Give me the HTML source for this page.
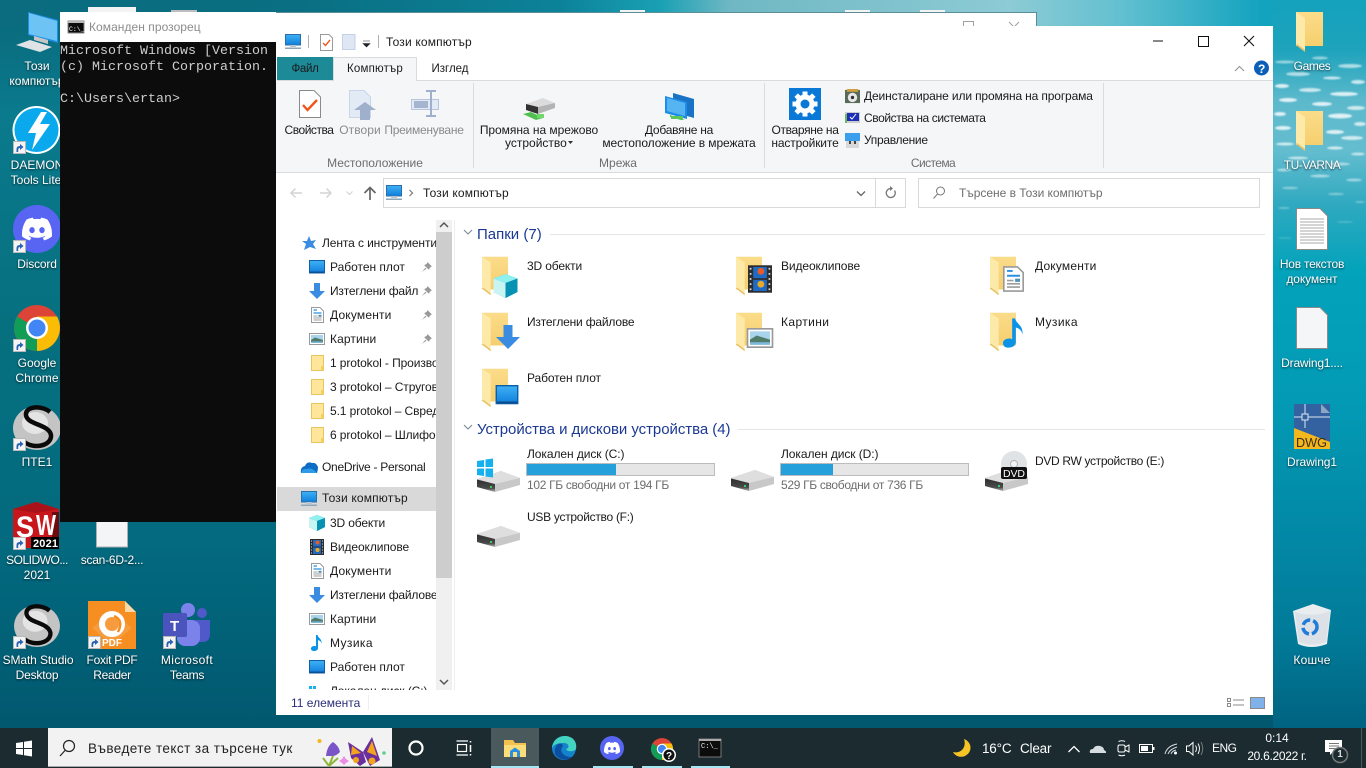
<!DOCTYPE html>
<html lang="bg"><head><meta charset="utf-8"><title>Този компютър</title>
<style>
html,body{margin:0;padding:0;width:1366px;height:768px;overflow:hidden;background:#046a80}
body{position:relative;font-family:"Liberation Sans","DejaVu Sans",sans-serif;font-size:12px;color:#1a1a1a}
.t{position:absolute;white-space:nowrap;line-height:16px;letter-spacing:0}
.c{transform:translateX(-50%)}
.w{color:#fff;text-shadow:0 1px 2px rgba(0,0,0,.7)}
.g{color:#8a8a8a}
.s{color:#6d6d6d}
.h{color:#1c3a94;font-size:15px;line-height:18px}
.l,svg.l{position:absolute;left:0;top:0;width:1366px;height:768px}
.r{position:absolute}
.clip{position:absolute;left:277px;top:220px;width:159px;height:470px;overflow:hidden}
.clip .t{margin-left:-277px;margin-top:-220px}
</style></head><body>

<!-- wallpaper -->
<div class="r" style="left:0;top:0;width:1366px;height:768px;background:linear-gradient(90deg,#0a6c7e 0,#0a6f82 300px,#0c8299 560px,#19a0b4 660px,#6fb8c3 730px,#8dcbd5 1010px,#63c0d0 1120px,#14a3bf 1260px,#12a2bc 1366px)"></div>
<div class="r" style="left:0;top:24px;width:1366px;height:704px;background:linear-gradient(180deg,rgba(5,118,136,0) 0,#0a7a8d 90px,#06707f 300px,#036a7f 520px,#01586f 704px)"></div>
<div class="r" style="left:1273px;top:0;width:93px;height:728px;background:linear-gradient(180deg,#14a2bd 0,#1ea3bc 50px,#5cb9cc 100px,#64bdcf 150px,#2fa9c0 205px,#03a3bb 270px,#039ab5 400px,#0285a3 560px,#017a98 640px,#006381 728px)"></div>
<svg class="l" viewBox="0 0 1366 768" style="filter:blur(.7px)">
<g fill="#fff">
<ellipse cx="1285" cy="62" rx="10" ry="1.500" opacity=".5"/><ellipse cx="1320" cy="58" rx="8" ry="1.500" opacity=".5"/><ellipse cx="1350" cy="66" rx="12" ry="2" opacity=".6"/>
<ellipse cx="1298" cy="74" rx="12" ry="2" opacity=".6"/><ellipse cx="1332" cy="78" rx="9" ry="1.500" opacity=".7"/><ellipse cx="1358" cy="82" rx="7" ry="2" opacity=".7"/>
<ellipse cx="1282" cy="86" rx="7" ry="2" opacity=".8"/><ellipse cx="1310" cy="90" rx="11" ry="2" opacity=".7"/><ellipse cx="1344" cy="94" rx="14" ry="2" opacity=".8"/>
<ellipse cx="1288" cy="100" rx="9" ry="2" opacity=".8"/><ellipse cx="1322" cy="104" rx="10" ry="2" opacity=".8"/><ellipse cx="1356" cy="108" rx="9" ry="2" opacity=".7"/>
<ellipse cx="1280" cy="114" rx="6" ry="2" opacity=".8"/><ellipse cx="1340" cy="116" rx="12" ry="2.500" opacity=".8"/><ellipse cx="1360" cy="124" rx="6" ry="2" opacity=".7"/>
<ellipse cx="1283" cy="128" rx="8" ry="2" opacity=".8"/><ellipse cx="1335" cy="132" rx="9" ry="2" opacity=".8"/><ellipse cx="1352" cy="138" rx="11" ry="2" opacity=".7"/>
<ellipse cx="1285" cy="144" rx="9" ry="1.500" opacity=".7"/><ellipse cx="1335" cy="148" rx="8" ry="1.500" opacity=".7"/><ellipse cx="1358" cy="154" rx="7" ry="1.500" opacity=".6"/>
<ellipse cx="1298" cy="158" rx="10" ry="1.500" opacity=".6"/><ellipse cx="1340" cy="164" rx="10" ry="1.500" opacity=".5"/><ellipse cx="1284" cy="170" rx="7" ry="1.500" opacity=".5"/>
<ellipse cx="1320" cy="176" rx="10" ry="1.500" opacity=".5"/><ellipse cx="1354" cy="180" rx="8" ry="1.500" opacity=".45"/><ellipse cx="1290" cy="188" rx="8" ry="1.200" opacity=".4"/>
<ellipse cx="1336" cy="194" rx="8" ry="1.200" opacity=".35"/><ellipse cx="1360" cy="202" rx="5" ry="1" opacity=".3"/><ellipse cx="1284" cy="208" rx="6" ry="1" opacity=".3"/>
<ellipse cx="1345" cy="222" rx="8" ry="1" opacity=".2"/><ellipse cx="1285" cy="238" rx="7" ry="1" opacity=".15"/>
</g>
</svg>

<svg width="0" height="0" style="position:absolute">
<defs>
<linearGradient id="sc" x1="0" y1="0" x2="0" y2="1"><stop offset="0" stop-color="#3fb1f5"/><stop offset="1" stop-color="#0f7fdc"/></linearGradient>
<linearGradient id="fo" x1="0" y1="0" x2="0" y2="1"><stop offset="0" stop-color="#fbdc8a"/><stop offset="1" stop-color="#f6cf6e"/></linearGradient>
<linearGradient id="dr" x1="0" y1="0" x2="0" y2="1"><stop offset="0" stop-color="#2f2f2f"/><stop offset=".7" stop-color="#4a4a4a"/><stop offset="1" stop-color="#b5b5b5"/></linearGradient>
<symbol id="arrow" viewBox="0 0 13 13"><rect width="13" height="13" fill="#f4f4f4"/><rect x=".5" y=".5" width="12" height="12" fill="none" stroke="#b8b8b8"/><path d="M3.5 11V8q0-3 3.5-3V3l3.5 3-3.5 3V7q-1.8 0-1.8 2v2z" fill="#2a62b4"/></symbol>
<symbol id="folder" viewBox="0 0 27 40"><path d="M0 0H27V34H0z" fill="url(#fo)"/><path d="M0 0L9 6V40L0 33z" fill="#fdeaa8"/><path d="M0 33L9 40V38L1 32z" fill="#e5c063"/></symbol>
<symbol id="drive" viewBox="0 0 43 22"><path d="M0 9L24 1 43 8V15L18 22 0 17z" fill="#c8c8c8"/><path d="M0 9L24 1 43 8 18 14z" fill="#dedede"/><path d="M0 9.500L18 14V22L0 17z" fill="url(#dr)"/><rect x="13" y="16" width="2" height="2" fill="#35d05a"/></symbol>
<symbol id="mon" viewBox="0 0 16 16"><rect x=".5" y=".5" width="15" height="10.5" fill="url(#sc)" stroke="#2a6fa8"/><rect x="5" y="11" width="6" height="2" fill="#b9c6cf"/><rect x="0" y="13.5" width="16" height="1.5" fill="#8ea6b7"/></symbol>
<symbol id="down" viewBox="0 0 16 16"><path d="M5 0H11V8H16L8 16 0 8H5z" fill="#3a8ce2"/></symbol>
<symbol id="desk" viewBox="0 0 16 14"><rect x=".5" y=".5" width="15" height="12.5" fill="url(#sc)" stroke="#0f5fa8"/><rect x="1" y="11.5" width="14" height="1.5" fill="#0b4f92"/></symbol>
<symbol id="doc" viewBox="0 0 13 16"><path d="M.5.5H9L12.5 4V15.5H.5z" fill="#fff" stroke="#9a9a9a"/><path d="M2.5 3H6M2.5 6H10.500" stroke="#2d8fe0" stroke-width="1.200"/><path d="M2.5 9H6.500M2.5 11H10.500M2.5 13H10.500" stroke="#9c9c9c"/><rect x="7.500" y="7.800" width="3" height="2" fill="#4d93b8"/></symbol>
<symbol id="pic" viewBox="0 0 16 12"><rect x=".5" y=".5" width="15" height="11" fill="#fff" stroke="#9a9a9a"/><rect x="2" y="2" width="12" height="8" fill="#a9d4ee"/><path d="M2 7L6 4.5 14 7V10H2z" fill="#527c6a"/><rect x="2" y="8.5" width="12" height="1.5" fill="#7cb7dc"/></symbol>
<symbol id="vid" viewBox="0 0 14 16"><rect width="14" height="16" fill="#2d2d2d"/><rect x="3" y="1" width="8" height="6.5" fill="#1f6ac4"/><rect x="3" y="8.5" width="8" height="6.5" fill="#1f6ac4"/><circle cx="7.5" cy="3.5" r="2" fill="#e85b28"/><circle cx="7.5" cy="11" r="2" fill="#e8a928"/><path d="M1 2h1M1 5h1M1 8h1M1 11h1M1 14h1M12 2h1M12 5h1M12 8h1M12 11h1M12 14h1" stroke="#ddd"/></symbol>
<symbol id="music" viewBox="0 0 12 16"><path d="M5 0H6.600C7 3 11.500 4 10.500 9 10.500 6.500 8.500 5.500 7 5V13C7 15 5 16 3 16S0 15 0 13.500 1.500 11 3.300 11C4 11 4.600 11.100 5 11.400z" fill="#0b93e8"/></symbol>
<symbol id="cube" viewBox="0 0 16 16"><path d="M8 0L16 3V12L8 16 0 12V3z" fill="#12a9c8"/><path d="M8 0L16 3 8 6 0 3z" fill="#8ff0ee"/><path d="M0 3L8 6V16L0 12z" fill="#c8f4f2"/><path d="M8 6L16 3V12L8 16z" fill="#0792b4"/></symbol>
<symbol id="yf" viewBox="0 0 13 16"><rect x=".5" y=".5" width="12" height="15" fill="#ffe69a" stroke="#e8c560"/><rect x="10" y="11" width="2.500" height="4.500" fill="#f4cf5e"/></symbol>
<symbol id="pin" viewBox="0 0 10 10"><path d="M5.500 0L10 4.500 8.500 5 6.800 7.800 2.200 3.200 5 1.500zM3.400 5.600L0 10 4.400 6.600z" fill="#9a9a9a"/></symbol>
<symbol id="shield" viewBox="0 0 16 16"><rect x="0" y="1" width="16" height="14" fill="#5a6a5a"/><rect x="2" y="0" width="12" height="3" fill="#d0a040"/><circle cx="8" cy="9" r="5" fill="#e8e8e8"/><circle cx="8" cy="9" r="1.800" fill="#333"/></symbol>
<symbol id="discord" viewBox="0 0 24 24"><path d="M20.317 4.37a19.791 19.791 0 0 0-4.885-1.515.074.074 0 0 0-.079.037c-.21.375-.444.864-.608 1.25a18.27 18.27 0 0 0-5.487 0 12.64 12.64 0 0 0-.617-1.25.077.077 0 0 0-.079-.037A19.736 19.736 0 0 0 3.677 4.37a.07.07 0 0 0-.032.027C.533 9.046-.32 13.58.099 18.057a.082.082 0 0 0 .031.057 19.9 19.9 0 0 0 5.993 3.03.078.078 0 0 0 .084-.028 14.09 14.09 0 0 0 1.226-1.994.076.076 0 0 0-.041-.106 13.107 13.107 0 0 1-1.872-.892.077.077 0 0 1-.008-.128 10.2 10.2 0 0 0 .372-.292.074.074 0 0 1 .077-.01c3.928 1.793 8.18 1.793 12.062 0a.074.074 0 0 1 .078.01c.12.098.246.198.373.292a.077.077 0 0 1-.006.127 12.299 12.299 0 0 1-1.873.892.077.077 0 0 0-.041.107c.36.698.772 1.362 1.225 1.993a.076.076 0 0 0 .084.028 19.839 19.839 0 0 0 6.002-3.03.077.077 0 0 0 .032-.054c.5-5.177-.838-9.674-3.549-13.66a.061.061 0 0 0-.031-.03zM8.02 15.33c-1.183 0-2.157-1.085-2.157-2.419 0-1.333.956-2.419 2.157-2.419 1.21 0 2.176 1.096 2.157 2.42 0 1.333-.956 2.418-2.157 2.418zm7.975 0c-1.183 0-2.157-1.085-2.157-2.419 0-1.333.955-2.419 2.157-2.419 1.21 0 2.176 1.096 2.157 2.42 0 1.333-.946 2.418-2.157 2.418z" fill="#fff"/></symbol>
<symbol id="chrome" viewBox="0 0 46 46"><circle cx="23" cy="23" r="23" fill="#db4437"/><path d="M23 23L43 34A23 23 0 0 1 23 46 23 23 0 0 1 3 34z" fill="#0f9d58"/><path d="M23 23L23 46A23 23 0 0 0 43 34 23 23 0 0 0 43 11.500H23z" fill="#fbbc05"/><path d="M23 23L3 34A23 23 0 0 1 3 11.500z" fill="#0f9d58"/><circle cx="23" cy="23" r="11" fill="#fff"/><circle cx="23" cy="23" r="8.500" fill="#4285f4"/></symbol>
<symbol id="smath" viewBox="0 0 48 46"><ellipse cx="24" cy="23" rx="24" ry="22" fill="#c4c4c4"/><ellipse cx="22" cy="18" rx="13" ry="11" fill="#e4e4e4"/><path d="M37 7C29 0 12 1 13 10 14 20 36 19 38 30 39 41 20 45 10 36" fill="none" stroke="#0a0a0a" stroke-width="4.500"/></symbol>
</defs></svg>

<!-- desktop icons -->
<svg class="l" viewBox="0 0 1366 768">
<path d="M28 12L58 20V43L28 35z" fill="#1d8fe6"/><path d="M29 13L57 21V41L29 34z" fill="#6ec3f5"/><path d="M34 36L48 40V44L34 40z" fill="#c6c6c6"/><path d="M16 45L30 40 52 47 40 52z" fill="#dfe3e6"/>
<rect x="88" y="7" width="48" height="6" fill="#f3f3f3"/><rect x="171" y="10" width="26" height="3" fill="#bdbdbd"/>
<rect x="620" y="10" width="25" height="4" fill="#f3f3f3"/><rect x="845" y="10" width="25" height="4" fill="#f3f3f3"/><rect x="920" y="10" width="25" height="4" fill="#f3f3f3"/>
<circle cx="36.500" cy="130" r="24" fill="#fff"/><circle cx="36.500" cy="130" r="22" fill="#0aa8ec"/><path d="M41 112L28 133H36L32 150 50 124H40L47 112z" fill="#fff"/>
<use href="#arrow" x="13" y="141" width="13" height="13"/>
<circle cx="37" cy="229" r="24" fill="#5865f2"/><use href="#discord" x="22" y="214" width="30" height="30"/>
<use href="#arrow" x="13" y="240" width="13" height="13"/>
<use href="#chrome" x="14" y="305" width="46" height="46"/><use href="#arrow" x="13" y="339" width="13" height="13"/>
<use href="#smath" x="13" y="405" width="48" height="46"/><use href="#arrow" x="13" y="438" width="13" height="13"/>
<path d="M13 509L36 502 59 509V548H13z" fill="#c8161d"/><path d="M13 509L36 502 59 509 36 513z" fill="#a81218"/><path d="M52 512H59V548H52z" fill="#6e0a0e"/>
<text x="16" y="537" font-family="Liberation Sans" font-weight="700" font-size="30" fill="#fff" textLength="18" lengthAdjust="spacingAndGlyphs">S</text><text x="36" y="535" font-family="Liberation Sans" font-weight="700" font-size="29" fill="#fff" textLength="20" lengthAdjust="spacingAndGlyphs">W</text>
<rect x="31" y="537" width="28" height="12" fill="#000"/><text x="33" y="547" font-family="Liberation Sans" font-weight="700" font-size="11" fill="#fff" textLength="25">2021</text>
<use href="#arrow" x="13" y="537" width="13" height="13"/>
<rect x="96.500" y="520" width="31" height="27" fill="#f4f5f7" stroke="#b0b0b0"/>
<use href="#smath" x="13" y="604" width="48" height="44"/><use href="#arrow" x="13" y="636" width="13" height="13"/>
<path d="M88 601H125L136 612V649H88z" fill="#f68e22"/><path d="M125 601L136 612H125z" fill="#fcd9a8"/><path d="M112 612L132 628 112 645 92 628z" fill="#fff" opacity=".13"/>
<circle cx="112" cy="624" r="10" fill="none" stroke="#fff" stroke-width="6"/><path d="M114 616Q124 620 118 632" fill="none" stroke="#f68e22" stroke-width="2.500"/>
<text x="102" y="646" font-family="Liberation Sans" font-weight="700" font-size="10" fill="#fff">PDF</text>
<use href="#arrow" x="88" y="636" width="13" height="13"/>
<circle cx="188" cy="610" r="7" fill="#7b83eb"/><circle cx="202" cy="613" r="5" fill="#5059c9"/><path d="M196 620H210V634Q210 642 202 642H196z" fill="#5059c9"/><rect x="177" y="620" width="23" height="26" rx="8" fill="#7b83eb"/>
<rect x="163" y="613" width="24" height="24" rx="2" fill="#4b53bc"/><text x="170" y="631" font-family="Liberation Sans" font-weight="700" font-size="15" fill="#fff">T</text>
<use href="#arrow" x="163" y="636" width="13" height="13"/>
<use href="#folder" x="1296" y="12" width="27" height="40"/><use href="#folder" x="1296" y="111" width="27" height="40"/>
<path d="M1296.500 208.500H1320L1327.500 216V249.500H1296.500z" fill="#fff" stroke="#8a8a8a"/><path d="M1300 219H1324M1300 222H1324M1300 225H1324M1300 228H1324M1300 231H1324M1300 234H1324M1300 237H1324M1300 240H1324M1300 243H1324" stroke="#a8a8a8"/>
<path d="M1296.500 307.500H1320L1327.500 315V348.500H1296.500z" fill="#f5f6f8" stroke="#8a8a8a"/>
<rect x="1294" y="404" width="36" height="45" fill="#34619f"/><path d="M1294 428L1330 442V449H1294z" fill="#f5b71e"/><path d="M1321 404L1330 413H1321z" fill="#8da6c6"/><path d="M1294 417H1330M1305 404V428" stroke="#dbe6f2"/><rect x="1302" y="414" width="6" height="6" fill="#34619f" stroke="#dbe6f2"/>
<text x="1296" y="447" font-family="Liberation Sans" font-size="12.500" fill="#3a2f1a" textLength="31" lengthAdjust="spacingAndGlyphs">DWG</text>
<path d="M1293 611L1313 604 1331 610 1327 644Q1311 650 1298 644z" fill="#e9edf0"/><path d="M1295 612Q1312 618 1330 611L1326 642Q1311 647 1299 642z" fill="#d4dce2" opacity=".7"/><circle cx="1310" cy="627" r="7" fill="none" stroke="#1f7cd8" stroke-width="3.500" stroke-dasharray="9 3"/>
</svg>
<div class="t w c" style="left:37px;top:58px">Този</div><div class="t w c" style="left:37px;top:73px">компютър</div>
<div class="t w c" style="left:37px;top:157px">DAEMON</div><div class="t w c" style="left:36px;top:172px">Tools Lite</div>
<div class="t w c" style="left:37px;top:256px;letter-spacing:-.17px">Discord</div>
<div class="t w c" style="left:37px;top:355px">Google</div><div class="t w c" style="left:37px;top:370px;letter-spacing:.1px">Chrome</div>
<div class="t w c" style="left:37px;top:454px">ПТЕ1</div>
<div class="t w c" style="left:37px;top:552px;letter-spacing:-.5px">SOLIDWO...</div><div class="t w c" style="left:37px;top:567px">2021</div>
<div class="t w c" style="left:112px;top:552px;letter-spacing:-.23px">scan-6D-2...</div>
<div class="t w c" style="left:38px;top:652px;letter-spacing:-.1px">SMath Studio</div><div class="t w c" style="left:37px;top:667px;letter-spacing:-.17px">Desktop</div>
<div class="t w c" style="left:112px;top:652px;letter-spacing:-.27px">Foxit PDF</div><div class="t w c" style="left:112px;top:667px;letter-spacing:-.3px">Reader</div>
<div class="t w c" style="left:187px;top:652px;letter-spacing:.4px">Microsoft</div><div class="t w c" style="left:187px;top:667px;letter-spacing:-.2px">Teams</div>
<div class="t w c" style="left:1312px;top:58px;letter-spacing:-.4px">Games</div>
<div class="t w c" style="left:1312px;top:157px;letter-spacing:-.5px">TU-VARNA</div>
<div class="t w c" style="left:1312px;top:256px;letter-spacing:-.24px">Нов текстов</div><div class="t w c" style="left:1312px;top:271px;letter-spacing:-.1px">документ</div>
<div class="t w c" style="left:1312px;top:355px;letter-spacing:-.2px">Drawing1....</div>
<div class="t w c" style="left:1312px;top:454px;letter-spacing:-.1px">Drawing1</div>
<div class="t w c" style="left:1312px;top:652px;letter-spacing:.2px">Кошче</div>

<!-- back window -->
<div class="r" style="left:60px;top:12px;width:977px;height:60px;background:#fff;border:1px solid #5b8c98;box-sizing:border-box"></div>
<svg class="l" viewBox="0 0 1366 768"><rect x="963.500" y="21.500" width="10" height="10" fill="none" stroke="#a0a0a0"/><path d="M1009 22L1014 27 1019 22" fill="none" stroke="#a0a0a0"/></svg>

<!-- cmd -->
<div class="r" style="left:60px;top:12px;width:216px;height:30px;background:#fff"></div>
<div class="r" style="left:60px;top:42px;width:216px;height:480px;background:#0c0c0c;overflow:hidden;font-family:'Liberation Mono',monospace;font-size:13.33px;line-height:16px;color:#ccc;white-space:pre"><div style="position:absolute;left:0;top:2px;width:216px">Microsoft Windows [Version
(c) Microsoft Corporation.

C:\Users\ertan&gt;</div></div>
<svg class="l" viewBox="0 0 1366 768"><rect x="68" y="21" width="16" height="12" fill="#0c0c0c" stroke="#8a8a8a"/><rect x="68" y="21" width="16" height="2" fill="#b8b8b8"/><text x="69" y="31" font-family="Liberation Mono" font-size="6.500" fill="#fff">C:\_</text></svg>
<div class="t" style="left:89px;top:19px;color:#8c8c8c;letter-spacing:.05px">Команден прозорец</div>

<!-- explorer -->
<div class="r" style="left:276px;top:26px;width:997px;height:689px;background:#fff"></div>
<div class="r" style="left:277px;top:57px;width:56px;height:23px;background:#1d8a98"></div>
<div class="r" style="left:333px;top:57px;width:84px;height:24px;background:#f5f6f7;border:1px solid #dadbdc;border-bottom:0;box-sizing:border-box"></div>
<div class="r" style="left:277px;top:80px;width:56px;height:1px;background:#dadbdc"></div>
<div class="r" style="left:417px;top:80px;width:856px;height:1px;background:#dadbdc"></div>
<div class="r" style="left:276px;top:81px;width:997px;height:91px;background:#f5f6f7;border-bottom:1px solid #dadbdc"></div>
<div class="r" style="left:473px;top:83px;width:1px;height:85px;background:#dadbdc"></div>
<div class="r" style="left:764px;top:83px;width:1px;height:85px;background:#dadbdc"></div>
<div class="r" style="left:1103px;top:83px;width:1px;height:85px;background:#dadbdc"></div>
<div class="r" style="left:383px;top:178px;width:523px;height:30px;border:1px solid #d9d9d9;box-sizing:border-box"></div>
<div class="r" style="left:875px;top:179px;width:1px;height:28px;background:#d9d9d9"></div>
<div class="r" style="left:918px;top:178px;width:342px;height:30px;border:1px solid #d9d9d9;box-sizing:border-box"></div>
<div class="r" style="left:277px;top:487px;width:159px;height:24px;background:#d9d9d9"></div>
<div class="r" style="left:436px;top:220px;width:16px;height:470px;background:#f0f0f0"></div>
<div class="r" style="left:436px;top:232px;width:16px;height:346px;background:#cdcdcd"></div>
<div class="r" style="left:454px;top:220px;width:1px;height:470px;background:#eee"></div>

<svg class="l" viewBox="0 0 1366 768">
<use href="#mon" x="285" y="34" width="16" height="16"/><path d="M308.500 35V48M378.500 35V48" stroke="#b0b0b0"/>
<path d="M320.500 34.500H329L332.500 38V50.500H320.500z" fill="#fff" stroke="#9a9a9a"/><path d="M323 43L325.500 45.500 330 40" fill="none" stroke="#ea5a1e" stroke-width="1.400"/>
<path d="M342.500 34.500H355V49.500H342.500z" fill="#dfe7f4" stroke="#c6d2e6"/>
<path d="M363 41H370M363 43.500H370L366.500 47z" fill="#222" stroke="#222" stroke-width=".6"/>
<path d="M1153 41H1163" stroke="#111"/><rect x="1198.500" y="36.500" width="10" height="10" fill="none" stroke="#111"/><path d="M1244 36L1254 46M1254 36L1244 46" stroke="#111" stroke-width="1.100"/>
<path d="M1235 71L1239.500 66.500 1244 71" fill="none" stroke="#9a9a9a" stroke-width="1.200"/>
<circle cx="1261.500" cy="68" r="7.500" fill="#0b5fb8"/><text x="1258" y="73" font-family="Liberation Sans" font-weight="700" font-size="12" fill="#fff">?</text>
<path d="M299.500 90.500H314L320.500 97V117.500H299.500z" fill="#fff" stroke="#8a8a8a"/><path d="M303 105L307.500 110 317 100" fill="none" stroke="#f0561c" stroke-width="2.400"/>
<path d="M349.500 90.500H364L370.500 97V117.500H349.500z" fill="#e2eaf6" stroke="#c8d4e8"/><path d="M360 120V110H354L365 102 376 110H370V120z" fill="#9fb0cc"/>
<rect x="411.500" y="99.500" width="27" height="10" fill="#e2eaf6" stroke="#b7c4da"/><rect x="414" y="101" width="14" height="7" fill="#a5b5d0"/><path d="M426 91H436M431 91V116M426 116H436" stroke="#9fb0cc" stroke-width="2" fill="none"/>
<g transform="translate(523 98)"><path d="M3 6L20 0 32 5 15 12z" fill="#dcdcdc"/><path d="M3 6L15 9V16L3 12z" fill="#333"/><path d="M15 9L32 5V10L15 16z" fill="#b4b4b4"/><path d="M0 16L8 14 20 20 13 22z" fill="#4fc04f"/><rect x="14" y="16" width="7" height="4" fill="#6fd86a"/></g>
<g transform="translate(665 93)"><path d="M8 0L29 6V25L8 19z" fill="#1b73c6"/><path d="M0 3L22 9V26L0 20z" fill="#1f8de6"/><path d="M2 5L20 10V23L2 18z" fill="#55b5f2"/><path d="M5 22L20 27 16 27 5 24z" fill="#4fc04f"/><rect x="6" y="23" width="12" height="3" fill="#5cc85a"/></g>
<rect x="789" y="88" width="32" height="32" fill="#0a78d7"/>
<g transform="translate(805 104)"><circle r="9.500" fill="#fff"/><path d="M-2.500-12.500H2.500V12.500H-2.500zM-12.500-2.500H12.500V2.500H-12.500z" fill="#fff"/><path d="M-2.500-12.500H2.500V12.500H-2.500zM-12.500-2.500H12.500V2.500H-12.500z" fill="#fff" transform="rotate(45)"/><circle r="4.500" fill="#0a78d7"/></g>
<use href="#shield" x="845" y="89" width="15" height="15"/>
<rect x="845" y="112" width="15" height="11" fill="#ccc"/><rect x="847" y="113" width="12" height="8" fill="#1c2fb8"/><path d="M850 117L852 119 856 114" stroke="#fff" fill="none"/><rect x="845" y="114" width="2" height="9" fill="#6cb85a"/>
<rect x="845" y="133" width="15" height="8" fill="#3c9fee"/><rect x="846" y="141" width="13" height="7" fill="#d8d8d8"/><rect x="849" y="141" width="2" height="3" fill="#444"/><rect x="854" y="141" width="2" height="3" fill="#444"/>
<path d="M568 141H573L570.500 144z" fill="#333"/>
<path d="M302 193H291M295.500 188.500L291 193 295.500 197.500" fill="none" stroke="#d4d4d4" stroke-width="1.500"/><path d="M320 193H331M326.500 188.500L331 193 326.500 197.500" fill="none" stroke="#d4d4d4" stroke-width="1.500"/>
<path d="M346.500 191.500L349.500 194.500 352.500 191.500" fill="none" stroke="#d4d4d4" stroke-width="1.200"/>
<path d="M370 200V188M364.500 193L370 187.500 375.500 193" fill="none" stroke="#666" stroke-width="1.700"/>
<use href="#mon" x="386" y="185" width="16" height="16"/><path d="M409.500 190L412.500 193 409.500 196" fill="none" stroke="#777" stroke-width="1.200"/>
<path d="M857 191.500L861 195.500 865 191.500" fill="none" stroke="#666" stroke-width="1.300"/>
<path d="M894.500 190.500A4.500 4.500 0 1 1 890.500 188.500" fill="none" stroke="#777" stroke-width="1.300"/><path d="M890 186L893 188.500 890 191z" fill="#777"/>
<circle cx="940.500" cy="191" r="4" fill="none" stroke="#777"/><path d="M937.500 194L933.500 198.500" stroke="#777"/>
<path d="M440 227L444 223 448 227" fill="none" stroke="#555" stroke-width="1.500"/><path d="M440 680L444 684 448 680" fill="none" stroke="#555" stroke-width="1.500"/>
<path d="M464 230L468 234 472 230M464 425L468 429 472 425" fill="none" stroke="#7a8a9a" stroke-width="1.100"/>
<path d="M550 234.500H1265M738 429.500H1265" stroke="#e5e5e5"/>
<use href="#folder" x="482" y="256" width="26" height="40"/><use href="#folder" x="482" y="312" width="26" height="40"/><use href="#folder" x="482" y="368" width="26" height="40"/>
<use href="#folder" x="736" y="256" width="26" height="40"/><use href="#folder" x="736" y="312" width="26" height="40"/>
<use href="#folder" x="990" y="256" width="26" height="40"/><use href="#folder" x="990" y="312" width="26" height="40"/>
<use href="#cube" x="493" y="274" width="25" height="24"/>
<use href="#down" x="496" y="325" width="24" height="24"/>
<use href="#desk" x="493" y="385" width="28" height="20"/>
<use href="#vid" x="748" y="265" width="24" height="28"/>
<use href="#pic" x="746" y="328" width="28" height="20"/>
<use href="#doc" x="1003" y="265" width="21" height="28"/>
<use href="#music" x="1003" y="317" width="22" height="32"/>
<use href="#drive" x="477" y="470" width="43" height="22"/>
<path d="M477 461L484 460V467H477zM485.500 459.500L493 458.500V467H485.500zM477 468.500H484V476L477 475zM485.500 468.500H493V477.500L485.500 476.500z" fill="#15b1ee"/>
<use href="#drive" x="731" y="469" width="43" height="22"/>
<use href="#drive" x="985" y="469" width="43" height="22"/>
<circle cx="1014" cy="464" r="13" fill="#dfe3e6"/><circle cx="1014" cy="464" r="3.500" fill="#f4f4f4" stroke="#b4b4b4"/><rect x="1001" y="467" width="26" height="12" rx="2" fill="#111"/>
<text x="1003" y="477" font-family="Liberation Sans" font-size="10.500" fill="#fff" textLength="22">DVD</text>
<use href="#drive" x="477" y="525" width="43" height="22"/>
<path d="M368.500 695V710" stroke="#eee"/>
<path d="M1227.500 698.500h3v3h-3zM1227.500 703.500h3v3h-3z" fill="none" stroke="#8a8a8a"/><path d="M1233 700H1244M1233 705H1244" stroke="#8a8a8a"/>
<rect x="1250.500" y="697.500" width="14" height="11" fill="#7fb2e8" stroke="#8a8a8a"/>
</svg>

<!-- explorer text -->
<div class="t" style="left:386px;top:34px;letter-spacing:.17px">Този компютър</div>
<div class="t c" style="left:305px;top:61px;font-size:11.500px;letter-spacing:-.3px">Файл</div>
<div class="t c" style="left:375px;top:61px;font-size:11.500px;letter-spacing:.2px">Компютър</div>
<div class="t c" style="left:450px;top:61px;font-size:11.500px">Изглед</div>
<div class="t c" style="left:309px;top:122px;letter-spacing:-.47px">Свойства</div>
<div class="t c g" style="left:360px;top:122px;letter-spacing:.07px">Отвори</div>
<div class="t c g" style="left:424px;top:122px;letter-spacing:-.27px">Преименуване</div>
<div class="t c" style="left:539px;top:122px;letter-spacing:-.04px">Промяна на мрежово</div>
<div class="t" style="left:505px;top:135px">устройство</div>
<div class="t c" style="left:679px;top:122px;letter-spacing:-.24px">Добавяне на</div>
<div class="t c" style="left:679px;top:135px;letter-spacing:-.08px">местоположение в мрежата</div>
<div class="t c" style="left:805px;top:122px;letter-spacing:-.33px">Отваряне на</div>
<div class="t c" style="left:805px;top:135px;letter-spacing:-.15px">настройките</div>
<div class="t" style="left:864px;top:88px;letter-spacing:-.14px">Деинсталиране или промяна на програма</div>
<div class="t" style="left:864px;top:110px;letter-spacing:-.41px">Свойства на системата</div>
<div class="t" style="left:864px;top:132px;letter-spacing:-.3px">Управление</div>
<div class="t c s" style="left:375px;top:155px;letter-spacing:-.03px">Местоположение</div>
<div class="t c s" style="left:618px;top:155px">Мрежа</div>
<div class="t c s" style="left:933px;top:155px;letter-spacing:-.6px">Система</div>
<div class="t" style="left:423px;top:185px;letter-spacing:.17px">Този компютър</div>
<div class="t s" style="left:959px;top:185px;letter-spacing:-.03px">Търсене в Този компютър</div>

<!-- nav tree -->
<div class="clip">
<svg class="l" style="margin-left:-277px;margin-top:-220px" viewBox="0 0 1366 768">
<path d="M309 236L311 241 316 240 313 244 316 249 310 247 304 250 306 244 302 241 307 241z" fill="#3a8ce2"/>
<use href="#desk" x="309" y="260" width="16" height="14"/><use href="#pin" x="422" y="262" width="10" height="10"/>
<use href="#down" x="309" y="283" width="16" height="16"/><use href="#pin" x="422" y="286" width="10" height="10"/>
<use href="#doc" x="311" y="307" width="13" height="16"/><use href="#pin" x="422" y="310" width="10" height="10"/>
<use href="#pic" x="309" y="333" width="16" height="12"/><use href="#pin" x="422" y="334" width="10" height="10"/>
<use href="#yf" x="311" y="355" width="13" height="16"/><use href="#yf" x="311" y="379" width="13" height="16"/><use href="#yf" x="311" y="403" width="13" height="16"/><use href="#yf" x="311" y="427" width="13" height="16"/>
<path d="M301 473Q300 467 305 466 307 461 312 463 316 462 318 467 318 470 317 473z" fill="#0f6cc4"/><path d="M301 473Q302 468 307 469 312 467 317 473z" fill="#2c9be8"/>
<use href="#mon" x="301" y="491" width="16" height="16"/>
<use href="#cube" x="309" y="515" width="16" height="16"/><use href="#vid" x="310" y="539" width="14" height="16"/><use href="#doc" x="311" y="563" width="13" height="16"/>
<use href="#down" x="309" y="587" width="16" height="16"/><use href="#pic" x="309" y="613" width="16" height="12"/><use href="#music" x="311" y="635" width="12" height="16"/><use href="#desk" x="309" y="660" width="16" height="14"/>
<path d="M309 686H312V689H309zM313 686H316V689H313z" fill="#15b1ee"/>
</svg>
<div class="t" style="left:322px;top:235px;letter-spacing:-.1px">Лента с инструменти</div>
<div class="t" style="left:330px;top:259px;letter-spacing:-.02px">Работен плот</div>
<div class="t" style="left:330px;top:283px;width:89px;overflow:hidden;letter-spacing:-.19px">Изтеглени файлове</div>
<div class="t" style="left:330px;top:307px;letter-spacing:.18px">Документи</div>
<div class="t" style="left:330px;top:331px;letter-spacing:.1px">Картини</div>
<div class="t" style="left:330px;top:355px;letter-spacing:-.1px">1 protokol - Производство</div>
<div class="t" style="left:330px;top:379px;letter-spacing:-.1px">3 protokol – Струговане</div>
<div class="t" style="left:330px;top:403px;letter-spacing:-.1px">5.1 protokol – Свредловане</div>
<div class="t" style="left:330px;top:427px;letter-spacing:-.1px">6 protokol – Шлифоване</div>
<div class="t" style="left:322px;top:459px;letter-spacing:-.28px">OneDrive - Personal</div>
<div class="t" style="left:322px;top:490px;letter-spacing:.17px">Този компютър</div>
<div class="t" style="left:330px;top:515px;letter-spacing:-.15px">3D обекти</div>
<div class="t" style="left:330px;top:539px;letter-spacing:-.1px">Видеоклипове</div>
<div class="t" style="left:330px;top:563px;letter-spacing:.18px">Документи</div>
<div class="t" style="left:330px;top:587px;letter-spacing:-.19px">Изтеглени файлове</div>
<div class="t" style="left:330px;top:611px;letter-spacing:.1px">Картини</div>
<div class="t" style="left:330px;top:635px;letter-spacing:.4px">Музика</div>
<div class="t" style="left:330px;top:659px;letter-spacing:-.02px">Работен плот</div>
<div class="t" style="left:330px;top:683px;letter-spacing:-.07px">Локален диск (C:)</div>
</div>

<!-- content text -->
<div class="t h" style="left:477px;top:226px">Папки (7)</div>
<div class="t h" style="left:477px;top:421px;letter-spacing:-.05px">Устройства и дискови устройства (4)</div>
<div class="t" style="left:527px;top:258px;letter-spacing:-.15px">3D обекти</div>
<div class="t" style="left:781px;top:258px;letter-spacing:-.1px">Видеоклипове</div>
<div class="t" style="left:1035px;top:258px;letter-spacing:.18px">Документи</div>
<div class="t" style="left:527px;top:314px;letter-spacing:-.19px">Изтеглени файлове</div>
<div class="t" style="left:781px;top:314px;letter-spacing:.4px">Картини</div>
<div class="t" style="left:1035px;top:314px;letter-spacing:.4px">Музика</div>
<div class="t" style="left:527px;top:370px;letter-spacing:-.1px">Работен плот</div>
<div class="t" style="left:527px;top:446px;letter-spacing:-.07px">Локален диск (C:)</div>
<div class="r" style="left:526px;top:463px;width:189px;height:13px;background:#e6e6e6;border:1px solid #bcbcbc;box-sizing:border-box"><div style="width:89px;height:11px;background:#26a0da"></div></div>
<div class="t s" style="left:527px;top:477px;letter-spacing:-.32px">102 ГБ свободни от 194 ГБ</div>
<div class="t" style="left:781px;top:446px;letter-spacing:-.07px">Локален диск (D:)</div>
<div class="r" style="left:780px;top:463px;width:189px;height:13px;background:#e6e6e6;border:1px solid #bcbcbc;box-sizing:border-box"><div style="width:52px;height:11px;background:#26a0da"></div></div>
<div class="t s" style="left:781px;top:477px;letter-spacing:-.32px">529 ГБ свободни от 736 ГБ</div>
<div class="t" style="left:1035px;top:453px;letter-spacing:-.33px">DVD RW устройство (E:)</div>
<div class="t" style="left:527px;top:509px;letter-spacing:-.28px">USB устройство (F:)</div>
<div class="t" style="left:291px;top:695px;color:#2a2f78">11 елемента</div>

<!-- taskbar -->
<div class="r" style="left:0;top:728px;width:1366px;height:40px;background:#1b2b30"></div>
<div class="r" style="left:48px;top:728px;width:344px;height:39px;background:#f2f2f2;border-bottom:1px solid #aaa;box-sizing:border-box"></div>
<div class="r" style="left:491px;top:728px;width:48px;height:40px;background:#4a5a5c"></div>
<svg class="l" viewBox="0 0 1366 768">
<path d="M16 743L23 742V748H16zM24 741.800L32 740.500V748H24zM16 749H23V755L16 754zM24 749H32V756.500L24 755.200z" fill="#fff"/>
<circle cx="69" cy="746" r="5.500" fill="none" stroke="#222" stroke-width="1.200"/><path d="M65 750.500L60 756" stroke="#222" stroke-width="1.200"/>
<path d="M326 756Q327 746 333 742 339 746 340 752 336 756 333 756z" fill="#7a55c8"/><path d="M333 756L329 766M329 766L323 758M329 766L338 758" stroke="#8fb53a" stroke-width="2" fill="none"/><path d="M344 759L346 762 349 764 346 766 344 768 342 766 339 764 342 762z" fill="#ee8ee2" transform="translate(0 -3)"/>
<circle cx="319.500" cy="741" r="2" fill="#f2b61c"/><circle cx="384" cy="753" r="1.800" fill="#5fd08a"/>
<path d="M363 752L348 742 351 758 360 766 366 762z" fill="#6a2f9c"/><path d="M363 752L372 737 380 760 370 766z" fill="#6a2f9c"/>
<path d="M352 746L361 753 351 755zM372 741L377 756 367 752z" fill="#f2a51c"/><circle cx="356" cy="760" r="3" fill="#f2a51c"/><circle cx="372" cy="761" r="3.500" fill="#f2a51c"/>
<circle cx="416" cy="748" r="6.500" fill="none" stroke="#fff" stroke-width="2.200"/>
<path d="M456.500 741H468M456.500 755H468" stroke="#fff" stroke-width="1.200"/><rect x="457.500" y="744.500" width="9" height="7" fill="none" stroke="#fff" stroke-width="1.200"/><path d="M470.500 741V742.500M470.500 745V752M470.500 754V755.500" stroke="#fff" stroke-width="1.500"/>
<path d="M504 740H513L515 743H526V757H504z" fill="#f2c14e"/><path d="M504 745H526V757H504z" fill="#fbdd7a"/><path d="M510 757V751L515 747.500 520 751V757z" fill="#2a8fe0"/><rect x="513" y="752" width="4" height="5" fill="#fbdd7a"/>
<circle cx="564" cy="748" r="12" fill="#1582cc"/><path d="M552 748C553 738 563 734 570 737 575 739 577 744 576 749 574 752 567 752 566 749 570 748 569 743 564 743 558 743 554 744 552 748z" fill="#44d3c0"/><path d="M555 754C553 744 562 741 563 746 559 750 562 757 572 757 566 762 558 759 555 754z" fill="#0c4fa0"/>
<circle cx="612" cy="748" r="12" fill="#5865f2"/><use href="#discord" x="604" y="740" width="16" height="16"/>
<use href="#chrome" x="651" y="738" width="22" height="22"/><circle cx="669" cy="755" r="7" fill="#fff"/><circle cx="669" cy="755" r="5.500" fill="#111"/><text x="666" y="759" font-family="Liberation Sans" font-weight="700" font-size="10" fill="#fff">?</text>
<rect x="699" y="739" width="22" height="18" fill="#0c0c0c" stroke="#777"/><rect x="699" y="739" width="22" height="2" fill="#aaa"/><text x="701" y="748" font-family="Liberation Mono" font-size="7" fill="#eee">C:\_</text>
<rect x="491" y="766" width="48" height="2" fill="#a5e6f3"/><rect x="593" y="766" width="40" height="2" fill="#a5e6f3"/><rect x="642" y="766" width="40" height="2" fill="#a5e6f3"/><rect x="691" y="766" width="39" height="2" fill="#a5e6f3"/>
<path d="M964 739C972 742 973 752 965 756 960 758 955 756 953 752 960 754 967 748 964 739z" fill="#f7c325"/>
<path d="M1068.500 752L1074 746.500 1079.500 752" fill="none" stroke="#fff" stroke-width="1.300"/>
<path d="M1090 753Q1089 749 1093 749 1095 745 1100 746 1104 747 1104 750 1106.500 751 1106 753z" fill="#d6dde0"/>
<rect x="1118" y="745" width="7" height="7" rx="1.500" fill="none" stroke="#fff"/><path d="M1125 747L1129 745V752L1125 750M1118.500 741.500Q1122 740 1125 741.500M1118.500 755Q1122 756.500 1125 755" fill="none" stroke="#fff"/>
<rect x="1139.500" y="744.500" width="13" height="8" fill="none" stroke="#fff"/><rect x="1141" y="746" width="7" height="5" fill="#fff"/><rect x="1153" y="747" width="1.500" height="3" fill="#fff"/>
<path d="M1165 754Q1167 746 1177 744M1168 754Q1170 749 1177 747M1171 754Q1172 751 1176 750" fill="none" stroke="#d6dde0"/><circle cx="1175.500" cy="753" r="1.500" fill="#fff"/>
<path d="M1186.500 746H1189L1193 742.500V755L1189 751.500H1186.500z" fill="none" stroke="#fff"/><path d="M1195.500 745.500Q1197.500 748.500 1195.500 752M1198 743.500Q1201 748.500 1198 754" fill="none" stroke="#fff" stroke-width=".9"/><path d="M1201 742Q1204.500 748.500 1201 755" fill="none" stroke="#777"/>
<path d="M1325 740H1342V752H1333L1330 755V752H1325z" fill="#fff"/><path d="M1329 743.500H1339M1329 746H1339M1329 748.500H1339" stroke="#777"/>
<circle cx="1340" cy="755" r="7.500" fill="#1b2b30" stroke="#7a7a7a" stroke-width="1.500"/>
<path d="M1361.500 728V768" stroke="#4a585c"/>
</svg>
<div class="t" style="left:88px;top:741px;font-size:13.500px;letter-spacing:.45px;color:#222">Въведете текст за търсене тук</div>
<div class="t" style="left:982px;top:741px;color:#fff;font-size:13.500px;letter-spacing:-.2px">16°C</div>
<div class="t" style="left:1020px;top:741px;color:#fff;font-size:13.500px;letter-spacing:-.2px">Clear</div>
<div class="t" style="left:1212px;top:740px;color:#fff;letter-spacing:-.5px">ENG</div>
<div class="t c" style="left:1277px;top:730px;color:#fff">0:14</div>
<div class="t c" style="left:1277px;top:748px;color:#fff;letter-spacing:-.3px">20.6.2022 г.</div>
<div class="t c" style="left:1340px;top:747px;color:#ddd;font-weight:700;font-size:10px">1</div>
</body></html>
